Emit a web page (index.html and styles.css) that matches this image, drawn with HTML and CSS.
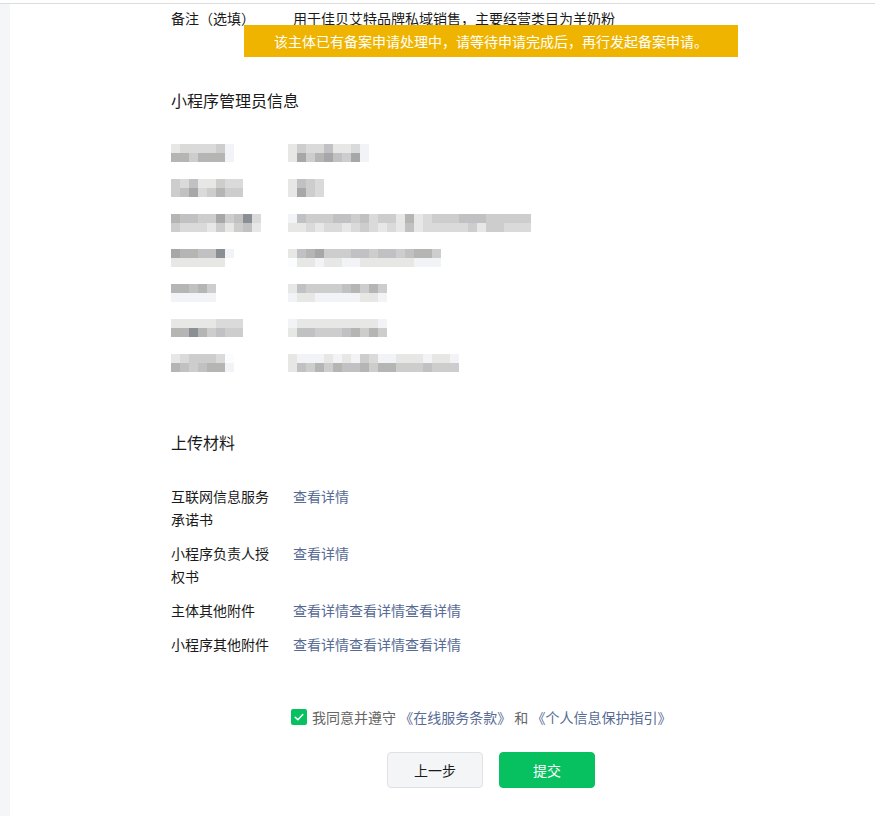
FILE: index.html
```html
<!DOCTYPE html>
<html lang="zh-CN">
<head>
<meta charset="utf-8">
<title>备案信息确认</title>
<link rel="stylesheet" href="styles.css">
</head>
<body>
<div class="topbar"></div>
<div class="page">
  <aside class="side"></aside>
  <main class="main">
    <div class="kv">
      <div class="k">备注（选填）</div>
      <div class="v">用于佳贝艾特品牌私域销售，主要经营类目为羊奶粉</div>
    </div>

    <h2 class="sec-title first">小程序管理员信息</h2>

    <div class="info">
      <div class="irow">
        <div class="mz ml"><div class="mr"><i class="a"></i><i class="b"></i><i class="b"></i><i class="b"></i><i class="b"></i><i class="c"></i><i class="w"></i></div><div class="mr"><i class="e"></i><i class="e"></i><i class="c"></i><i class="e"></i><i class="e"></i><i class="e"></i><i class="w"></i></div></div>
        <div class="mz"><div class="mr"><i class="a"></i><i class="c"></i><i class="b"></i><i class="b"></i><i class="d"></i><i class="a"></i><i class="a"></i><i class="b"></i><i class="w"></i></div><div class="mr"><i class="a"></i><i class="f"></i><i class="c"></i><i class="e"></i><i class="f"></i><i class="d"></i><i class="c"></i><i class="f"></i><i class="w"></i></div></div>
      </div>
      <div class="irow">
        <div class="mz ml"><div class="mr"><i class="c"></i><i class="b"></i><i class="d"></i><i class="a"></i><i class="a"></i><i class="c"></i><i class="b"></i><i class="b"></i></div><div class="mr"><i class="c"></i><i class="d"></i><i class="f"></i><i class="b"></i><i class="c"></i><i class="e"></i><i class="c"></i><i class="c"></i></div></div>
        <div class="mz"><div class="mr"><i class="a"></i><i class="d"></i><i class="c"></i><i class="b"></i></div><div class="mr"><i class="a"></i><i class="f"></i><i class="c"></i><i class="b"></i></div></div>
      </div>
      <div class="irow">
        <div class="mz ml"><div class="mr"><i class="e"></i><i class="d"></i><i class="d"></i><i class="c"></i><i class="c"></i><i class="f"></i><i class="c"></i><i class="d"></i><i class="g"></i><i class="b"></i></div><div class="mr"><i class="c"></i><i class="b"></i><i class="b"></i><i class="b"></i><i class="a"></i><i class="c"></i><i class="a"></i><i class="c"></i><i class="d"></i><i class="a"></i></div></div>
        <div class="mz"><div class="mr"><i class="w"></i><i class="d"></i><i class="c"></i><i class="c"></i><i class="c"></i><i class="d"></i><i class="d"></i><i class="c"></i><i class="d"></i><i class="b"></i><i class="c"></i><i class="c"></i><i class="a"></i><i class="e"></i><i class="a"></i><i class="b"></i><i class="c"></i><i class="c"></i><i class="c"></i><i class="d"></i><i class="d"></i><i class="d"></i><i class="c"></i><i class="c"></i><i class="c"></i><i class="c"></i><i class="c"></i></div><div class="mr"><i class="a"></i><i class="a"></i><i class="b"></i><i class="a"></i><i class="b"></i><i class="b"></i><i class="a"></i><i class="b"></i><i class="c"></i><i class="b"></i><i class="a"></i><i class="b"></i><i class="a"></i><i class="d"></i><i class="a"></i><i class="b"></i><i class="b"></i><i class="b"></i><i class="b"></i><i class="b"></i><i class="c"></i><i class="a"></i><i class="c"></i><i class="c"></i><i class="b"></i><i class="b"></i><i class="b"></i></div></div>
      </div>
      <div class="irow">
        <div class="mz ml"><div class="mr"><i class="f"></i><i class="e"></i><i class="e"></i><i class="d"></i><i class="d"></i><i class="g"></i><i class="w"></i></div><div class="mr"><i class="a"></i><i class="a"></i><i class="a"></i><i class="a"></i><i class="a"></i><i class="a"></i></div></div>
        <div class="mz"><div class="mr"><i class="a"></i><i class="d"></i><i class="e"></i><i class="f"></i><i class="c"></i><i class="c"></i><i class="c"></i><i class="d"></i><i class="d"></i><i class="c"></i><i class="d"></i><i class="d"></i><i class="c"></i><i class="d"></i><i class="e"></i><i class="e"></i><i class="c"></i></div><div class="mr"><i class="x"></i><i class="a"></i><i class="a"></i><i class="w"></i><i class="a"></i><i class="a"></i><i class="w"></i><i class="w"></i><i class="a"></i><i class="a"></i><i class="a"></i><i class="a"></i><i class="a"></i><i class="a"></i><i class="w"></i><i class="w"></i><i class="w"></i></div></div>
      </div>
      <div class="irow">
        <div class="mz ml"><div class="mr"><i class="e"></i><i class="e"></i><i class="d"></i><i class="e"></i><i class="c"></i></div><div class="mr"><i class="w"></i><i class="w"></i><i class="w"></i><i class="w"></i><i class="w"></i></div></div>
        <div class="mz"><div class="mr"><i class="a"></i><i class="d"></i><i class="c"></i><i class="c"></i><i class="c"></i><i class="c"></i><i class="d"></i><i class="e"></i><i class="c"></i><i class="e"></i><i class="c"></i></div><div class="mr"><i class="w"></i><i class="a"></i><i class="a"></i><i class="w"></i><i class="w"></i><i class="w"></i><i class="w"></i><i class="w"></i><i class="a"></i><i class="a"></i><i class="w"></i></div></div>
      </div>
      <div class="irow">
        <div class="mz ml"><div class="mr"><i class="a"></i><i class="a"></i><i class="a"></i><i class="a"></i><i class="a"></i><i class="b"></i><i class="b"></i><i class="b"></i></div><div class="mr"><i class="e"></i><i class="e"></i><i class="g"></i><i class="e"></i><i class="c"></i><i class="d"></i><i class="c"></i><i class="c"></i></div></div>
        <div class="mz"><div class="mr"><i class="w"></i><i class="a"></i><i class="a"></i><i class="a"></i><i class="a"></i><i class="a"></i><i class="a"></i><i class="a"></i><i class="a"></i><i class="a"></i><i class="w"></i></div><div class="mr"><i class="a"></i><i class="d"></i><i class="d"></i><i class="c"></i><i class="c"></i><i class="c"></i><i class="d"></i><i class="e"></i><i class="c"></i><i class="e"></i><i class="c"></i></div></div>
      </div>
      <div class="irow">
        <div class="mz ml"><div class="mr"><i class="a"></i><i class="b"></i><i class="c"></i><i class="c"></i><i class="c"></i><i class="b"></i><i class="x"></i></div><div class="mr"><i class="e"></i><i class="d"></i><i class="c"></i><i class="d"></i><i class="e"></i><i class="e"></i><i class="w"></i></div></div>
        <div class="mz"><div class="mr"><i class="a"></i><i class="w"></i><i class="w"></i><i class="w"></i><i class="a"></i><i class="w"></i><i class="a"></i><i class="w"></i><i class="c"></i><i class="b"></i><i class="w"></i><i class="w"></i><i class="a"></i><i class="a"></i><i class="a"></i><i class="w"></i><i class="a"></i><i class="a"></i><i class="w"></i></div><div class="mr"><i class="a"></i><i class="d"></i><i class="c"></i><i class="e"></i><i class="c"></i><i class="e"></i><i class="d"></i><i class="d"></i><i class="e"></i><i class="c"></i><i class="e"></i><i class="e"></i><i class="c"></i><i class="c"></i><i class="c"></i><i class="d"></i><i class="c"></i><i class="c"></i><i class="c"></i></div></div>
      </div>
    </div>

    <h2 class="sec-title second">上传材料</h2>

    <div class="uploads">
      <div class="urow">
        <div class="uk">互联网信息服务承诺书</div>
        <div class="uv"><a class="link" href="#">查看详情</a></div>
      </div>
      <div class="urow">
        <div class="uk">小程序负责人授权书</div>
        <div class="uv"><a class="link" href="#">查看详情</a></div>
      </div>
      <div class="urow">
        <div class="uk">主体其他附件</div>
        <div class="uv"><a class="link" href="#">查看详情</a><a class="link" href="#">查看详情</a><a class="link" href="#">查看详情</a></div>
      </div>
      <div class="urow">
        <div class="uk">小程序其他附件</div>
        <div class="uv"><a class="link" href="#">查看详情</a><a class="link" href="#">查看详情</a><a class="link" href="#">查看详情</a></div>
      </div>
    </div>

    <label class="agree">
      <span class="check"><svg width="16" height="16" viewBox="0 0 16 16"><path d="M4.2 8.2 L6.9 10.8 L11.8 5.6" fill="none" stroke="#fff" stroke-width="1.5" stroke-linecap="round" stroke-linejoin="round"/></svg></span>
      <span class="agree-text">我同意并遵守 <a class="link" href="#">《在线服务条款》</a> 和 <a class="link" href="#">《个人信息保护指引》</a></span>
    </label>

    <div class="actions">
      <button class="btn btn-default" type="button">上一步</button>
      <button class="btn btn-primary" type="button">提交</button>
    </div>
  </main>
</div>
<div class="toast">该主体已有备案申请处理中，请等待申请完成后，再行发起备案申请。</div>
</body>
</html>
```
FILE: styles.css
```css
* { box-sizing: border-box; }
html, body {
  margin: 0;
  padding: 0;
  background: #fff;
}
body {
  font-family: "Noto Sans CJK SC", "Microsoft YaHei", sans-serif;
  font-size: 14px;
  color: #1a1a1a;
  height: 816px;
  overflow: hidden;
  position: relative;
}
.topbar {
  height: 4px;
  border-bottom: 1px solid #dcdcdc;
}
.page {
  display: flex;
  height: 812px;
}
.side {
  width: 10px;
  background: #f5f6f8;
  flex: none;
}
.main {
  flex: 1;
  padding-left: 161px;
  padding-top: 3px;
}
.kv {
  display: flex;
  line-height: 23px;
}
.k {
  width: 122px;
  flex: none;
}
.v { color: #1a1a1a; }
.sec-title {
  margin: 0;
  font-size: 16px;
  font-weight: normal;
  line-height: 24px;
  color: #1a1a1a;
}
.sec-title.first { margin-top: 58px; }
.sec-title.second { margin-top: 58px; }

.info {
  margin-top: 32px;
  display: flex;
  flex-direction: column;
  gap: 17px;
}
.irow {
  display: flex;
  height: 18px;
}
.mz {
  display: flex;
  flex-direction: column;
}
.mz.ml {
  width: 117px;
  flex: none;
}
.mr {
  display: flex;
  height: 9px;
}
.mr i {
  width: 9px;
  height: 9px;
  flex: none;
}
.mr i.x { background: #fbfcfd; }
.mr i.w { background: #f2f3f6; }
.mr i.a { background: #e7e7e5; }
.mr i.b { background: #dadada; }
.mr i.c { background: #cdcdcd; }
.mr i.d { background: #c1c1c3; }
.mr i.e { background: #b5b5b4; }
.mr i.f { background: #a5a7a9; }
.mr i.g { background: #8b8f93; }

.uploads {
  margin-top: 31px;
  display: flex;
  flex-direction: column;
  gap: 11px;
}
.urow {
  display: flex;
  line-height: 23px;
}
.uk {
  width: 104px;
  margin-right: 18px;
  flex: none;
}
.link {
  color: #576b95;
  text-decoration: none;
}

.agree {
  display: flex;
  align-items: center;
  margin-top: 49px;
  margin-left: 120px;
  line-height: 24px;
  color: #666;
}
.check {
  width: 16px;
  height: 16px;
  border-radius: 2px;
  background: #07c160;
  display: inline-flex;
  margin-right: 5px;
  flex: none;
}
.check svg { display: block; }
.agree-text { white-space: nowrap; }

.actions {
  display: flex;
  gap: 16px;
  margin-top: 23px;
  margin-left: 216px;
}
.btn {
  width: 96px;
  height: 36px;
  border-radius: 4px;
  font-family: inherit;
  font-size: 14px;
  cursor: pointer;
  padding: 0;
}
.btn-default {
  background: #f4f5f7;
  border: 1px solid #dfe1e5;
  color: #1a1a1a;
}
.btn-primary {
  background: #07c160;
  border: 1px solid #07c160;
  color: #fff;
}

.toast {
  position: absolute;
  left: 244px;
  top: 25px;
  width: 494px;
  height: 32px;
  background: #efb400;
  color: #fff;
  font-size: 14px;
  line-height: 32px;
  text-align: center;
}
```
